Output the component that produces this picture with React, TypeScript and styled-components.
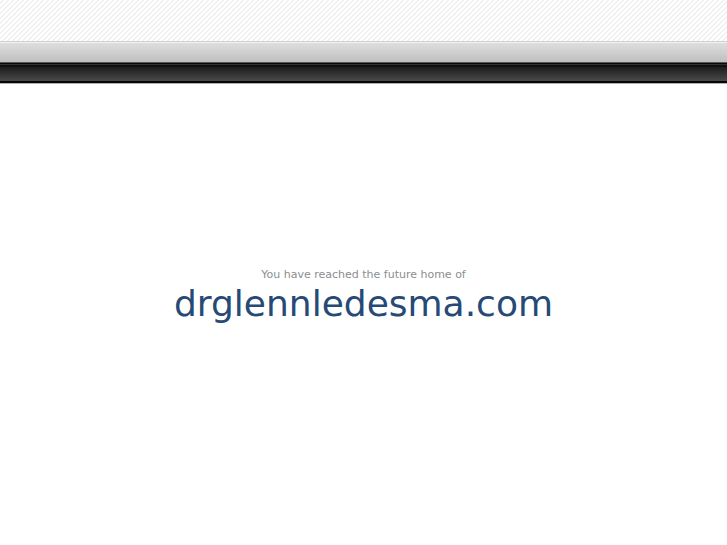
import React from 'react';
import styled, { createGlobalStyle } from 'styled-components';

const GlobalStyle = createGlobalStyle`
  body {
    margin: 0;
    background: #ffffff;
    font-family: 'DejaVu Sans', Verdana, sans-serif;
  }
`;

const Page = styled.div`
  min-height: 100vh;
  display: flex;
  flex-direction: column;
`;

const Stripes = styled.div`
  height: 41px;
  background: linear-gradient(135deg, #ffffff 25%, #f0f0f0 25% 50%, #ffffff 50% 75%, #f0f0f0 75%);
  background-size: 5px 5px;
`;

const SilverBar = styled.div`
  height: 20px;
  border-top: 1px solid #d0d0d0;
  background: linear-gradient(#f2f2f2 1px, #dedede 1px, #bfbfbf);
`;

const DarkBar = styled.div`
  height: 18px;
  border-top: 1px solid #555756;
  border-bottom: 2px solid #050505;
  background: linear-gradient(#080808 1px, #303030 1px 2px, #101010 2px 4px, #1c1c1c 4px, #4a4a4a);
`;

const Main = styled.main`
  flex: 1;
  display: flex;
  flex-direction: column;
  align-items: center;
  padding-top: 184px;
  border-top: 1px solid #b0b0b0;
  text-align: center;
`;

const Intro = styled.p`
  margin: 0;
  font-size: 11px;
  line-height: 14px;
  color: #8c8e90;
`;

const Domain = styled.h1`
  margin: 0;
  font-size: 36px;
  font-weight: normal;
  line-height: 44px;
  color: #264a75;
`;

const App: React.FC = () => (
  <Page>
    <GlobalStyle />
    <header>
      <Stripes />
      <SilverBar />
      <DarkBar />
    </header>
    <Main>
      <Intro>You have reached the future home of</Intro>
      <Domain>drglennledesma.com</Domain>
    </Main>
  </Page>
);

export default App;
